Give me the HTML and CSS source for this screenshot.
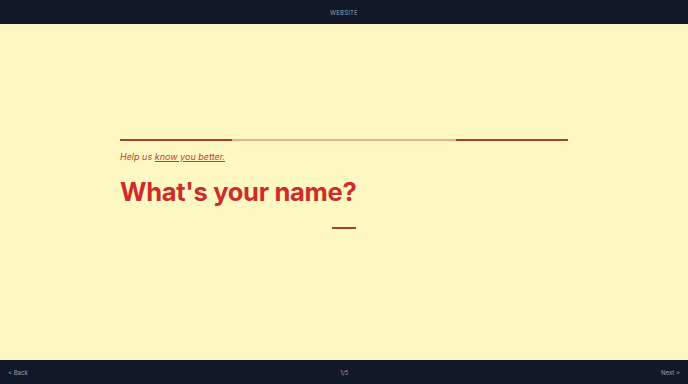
FILE: index.html
```html
<!DOCTYPE html>
<html>
<head>
<meta charset="utf-8">
<link rel="stylesheet" href="styles.css">
</head>
<body>
<div class="app">
  <header class="topbar"><span class="brand">WEBSITE</span></header>
  <main class="stage">
    <div class="card">
      <div class="progress">
        <span class="seg seg-dark"></span>
        <span class="seg seg-light"></span>
        <span class="seg seg-dark"></span>
      </div>
      <p class="lead">Help us <span class="link">know you better.</span></p>
      <h1 class="title">What's your name?</h1>
      <div class="dash"></div>
    </div>
  </main>
  <footer class="bottombar">
    <span class="nav">&lt; Back</span>
    <span class="nav">1/5</span>
    <span class="nav">Next &gt;</span>
  </footer>
</div>
</body>
</html>
```
FILE: styles.css
```css
* { box-sizing: border-box; }
html, body { margin: 0; padding: 0; }
body { font-family: Inter, "Liberation Sans", sans-serif; }
.app { display: flex; flex-direction: column; width: 688px; height: 384px; background: #fef9c3; }
.topbar { height: 24px; background: #111827; display: flex; align-items: center; justify-content: center; }
.brand { font-size: 6px; color: #9ca3af; letter-spacing: 0.2px; }
.stage { flex: 1; display: flex; justify-content: center; padding-top: 115px; }
.card { width: 448px; display: flex; flex-direction: column; }
.progress { display: flex; height: 2px; }
.seg { height: 2px; }
.seg-dark { width: 112px; background: #a8401f; }
.seg-light { flex: 1; background: #e9b38d; }
.lead { margin: 10px 0 0; font-size: 9px; font-style: italic; color: #c2402e; line-height: 12px; }
.link { text-decoration: underline; }
.title { margin: 13px 0 0; font-size: 25.5px; font-weight: 700; color: #d02b2b; line-height: 32px; letter-spacing: -0.3px; }
.dash { align-self: center; width: 24px; height: 2px; background: #a8401f; margin-top: 19px; }
.bottombar { height: 24px; background: #111827; display: flex; align-items: center; justify-content: space-between; padding: 0 8px; }
.nav { font-size: 6px; color: #9ca3af; }
```
